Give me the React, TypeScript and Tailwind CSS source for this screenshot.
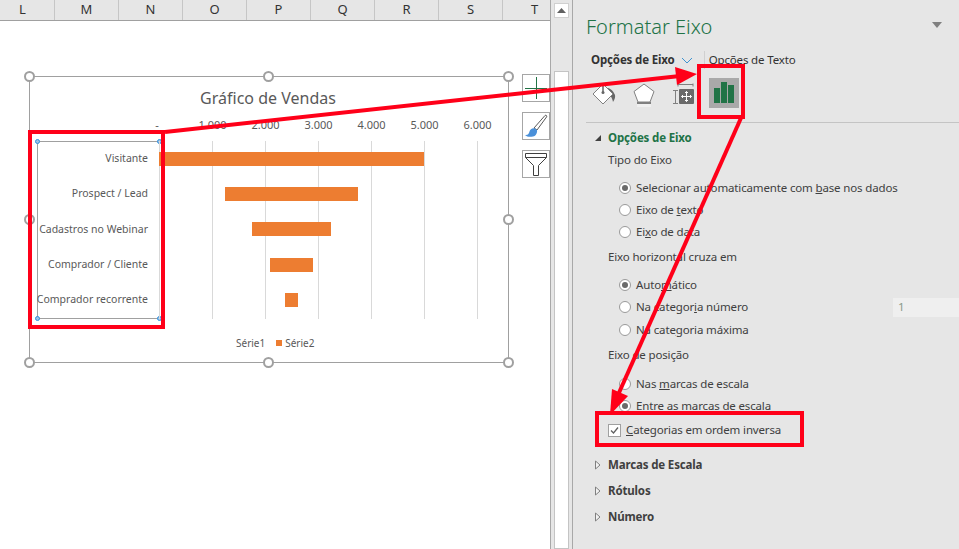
const columns = ['L', 'M', 'N', 'O', 'P', 'Q', 'R', 'S', 'T']
const ticks = ['-', '1.000', '2.000', '3.000', '4.000', '5.000', '6.000']

const funnel = [
  { label: 'Visitante', start: 0, end: 265 },
  { label: 'Prospect / Lead', start: 66, end: 199 },
  { label: 'Cadastros no Webinar', start: 93, end: 172 },
  { label: 'Comprador / Cliente', start: 111, end: 154 },
  { label: 'Comprador recorrente', start: 126, end: 139 },
]

function Handle({ className }: { className: string }) {
  return <span className={`absolute w-[11px] h-[11px] rounded-full bg-white border-2 border-[#a0a0a0] ${className}`} />
}

function AxisHandle({ className }: { className: string }) {
  return <span className={`absolute w-[5px] h-[5px] rounded-full bg-[#9dc3e6] border border-[#2e8fe0] ${className}`} />
}

function Radio({ checked, children }: { checked?: boolean; children: React.ReactNode }) {
  return (
    <div className="flex items-center h-[22px] ml-[46px]">
      <span className="flex items-center justify-center w-3 h-3 rounded-full bg-white border border-[#9a9a9a] shrink-0">
        {checked && <span className="w-[6px] h-[6px] rounded-full bg-[#6a6a6a]" />}
      </span>
      <span className="ml-[5px]">{children}</span>
    </div>
  )
}

function Collapsed({ label, className }: { label: string; className: string }) {
  return (
    <div className={`flex items-center h-[20px] ml-[21px] ${className}`}>
      <svg width="8" height="10" viewBox="0 0 8 10" className="shrink-0">
        <path d="M1.500 1v8L6 5z" fill="#f2f2f2" stroke="#808080" />
      </svg>
      <span className="ml-[6px] font-bold text-[#404040]">{label}</span>
    </div>
  )
}

function App() {
  return (
    <div className="relative flex h-screen w-[959px] overflow-hidden bg-white text-[#404040] font-['Noto_Sans',sans-serif] text-[11.5px] tracking-[-0.15px]">
      {/* Sheet */}
      <div className="flex flex-col w-[550px] shrink-0 overflow-hidden">
        <div className="flex h-[21px] shrink-0 -ml-[9px] bg-[#e6e6e6] border-b border-[#a0a0a0]">
          {columns.map((c) => (
            <div key={c} className="flex items-center justify-center w-16 shrink-0 border-r border-[#c6c6c6] text-[13px] tracking-normal text-[#333333]">
              {c}
            </div>
          ))}
        </div>

        <div className="flex items-start pt-[55px] pl-[29px] text-[#595959] text-[10.5px] tracking-normal">
          {/* Chart */}
          <div className="relative flex flex-col w-[480px] h-[287px] shrink-0 border border-[#a0a0a0]">
            <Handle className="-left-[6px] -top-[6px]" />
            <Handle className="left-[233px] -top-[6px]" />
            <Handle className="-right-[6px] -top-[6px]" />
            <Handle className="-left-[6px] top-[137px]" />
            <Handle className="-right-[6px] top-[137px]" />
            <Handle className="-left-[6px] -bottom-[6px]" />
            <Handle className="left-[233px] -bottom-[6px]" />
            <Handle className="-right-[6px] -bottom-[6px]" />

            <div className="flex justify-center h-[24px] mt-[9px] text-[16px] leading-[24px] -ml-[2px]">Gráfico de Vendas</div>

            <div className="flex h-[16px] mt-[7px] ml-[103px] leading-[16px] text-[11px]">
              {ticks.map((t) => (
                <div key={t} className={`w-[53px] shrink-0 text-center ${t === '-' ? 'pr-[5px]' : ''}`}>{t}</div>
              ))}
            </div>

            <div className="flex ml-[7px] mt-[8px]">
              {/* Category axis, selected */}
              <div className="relative flex flex-col w-[123px] h-[178px] shrink-0 border border-[#a0a0a0]">
                <AxisHandle className="-left-[3px] -top-[3px]" />
                <AxisHandle className="-right-[3px] -top-[3px]" />
                <AxisHandle className="-left-[3px] -bottom-[3px]" />
                <AxisHandle className="-right-[3px] -bottom-[3px]" />
                {funnel.map((row) => (
                  <div key={row.label} className="flex items-center justify-end h-[35.4px] pr-[11px] pb-px whitespace-nowrap">
                    {row.label}
                  </div>
                ))}
              </div>
              {/* Plot */}
              <div className="relative flex flex-col w-[320px] h-[178px] -ml-px">
                <div className="absolute inset-0 flex">
                  {ticks.map((t) => (
                    <div key={t} className="w-[53px] h-full shrink-0 border-l border-[#d9d9d9]" />
                  ))}
                </div>
                {funnel.map((row) => (
                  <div key={row.label} className="relative flex items-center h-[35.4px]">
                    <div
                      className="h-[14px] bg-[#ed7d31]"
                      style={{ marginLeft: row.start, width: row.end - row.start }}
                    />
                  </div>
                ))}
              </div>
            </div>

            <div className="flex items-center h-[16px] mt-[16px] ml-[206px] text-[10px] leading-[16px]">
              <span>Série1</span>
              <span className="w-[6px] h-[6px] ml-[11px] mr-[3px] bg-[#ed7d31]" />
              <span>Série2</span>
            </div>
          </div>

          {/* Chart buttons */}
          <div className="flex flex-col gap-[10px] ml-[13px] -mt-[2px]">
            <div className="flex items-center justify-center w-[28px] h-[28px] bg-white border border-[#a6a6a6]">
              <svg width="24" height="24" viewBox="0 0 24 24">
                <path d="M12.500 1v22M1 12.500h22" stroke="#217346" strokeWidth="1" />
              </svg>
            </div>
            <div className="flex items-center justify-center w-[28px] h-[28px] bg-white border border-[#a6a6a6]">
              <svg width="26" height="26" viewBox="0 0 26 26">
                <path d="M11 15 22 2.500c1-.8 2.200.3 1.600 1.400L14 17z" fill="#fff" stroke="#595959" />
                <path d="M2 22c3 .5 4-1.500 4.500-3.500.5-2 3-4 5.500-3l2 1.500c.5 2.500-1 6-4 6.500-3 .5-6 .5-8-1.500z" fill="#4a90d9" />
              </svg>
            </div>
            <div className="flex items-center justify-center w-[28px] h-[28px] bg-white border border-[#a6a6a6]">
              <svg width="24" height="26" viewBox="0 0 24 26">
                <path d="M1.500 2.500h21v4l-8 8v10h-5v-10l-8-8zM1.500 6.500h21" fill="#fff" stroke="#404040" />
              </svg>
            </div>
          </div>
        </div>
      </div>

      {/* Sheet scrollbar */}
      <div className="flex flex-col w-[23px] shrink-0 px-[3px] pt-[3px] bg-[#e6e6e6] border-l border-r border-[#a8a8a8] border-t-0">
        <div className="flex items-center justify-center h-[15px] bg-white border border-[#d0d0d0]">
          <svg width="9" height="5" viewBox="0 0 9 5"><path d="M4.500 0 9 5H0z" fill="#606060" /></svg>
        </div>
        <div className="flex-1 mt-[53px] bg-white border border-[#c4c4c4]" />
      </div>

      {/* Format pane */}
      <div className="flex flex-col flex-1 min-w-0 bg-[#e6e6e6]">
        <div className="flex items-center justify-between h-[30px] mt-[12px] pl-[13px] pr-[17px]">
          <span className="font-light text-[20px] tracking-normal text-[#217346]">Formatar Eixo</span>
          <svg width="10" height="6" viewBox="0 0 10 6" className="-mt-[5px]"><path d="M0 0h10L5 6z" fill="#808080" /></svg>
        </div>

        <div className="flex items-center h-[20px] mt-[8px] pl-[18px]">
          <span className="font-bold text-[#333333]">Opções de Eixo</span>
          <svg width="12" height="7" viewBox="0 0 12 7" className="ml-[6px]"><path d="M1 1l5 5 5-5" fill="none" stroke="#3f94d1" /></svg>
          <span className="w-px h-[18px] ml-[11px] mr-[4px] bg-[#d0d0d0]" />
          <span className="text-[#333333]">Opções de Texto</span>
        </div>

        <div className="flex items-center h-[30px] mt-[8px] pl-[19px]">
          <svg width="24" height="24" viewBox="0 0 24 24" className="mt-[2px]">
            <path d="M12 6c5-1 9 2 11 7 .5 2-.5 5-2 7-.5-2-1-5-3-6z" fill="#666666" />
            <path d="M11 2 1 12l10 10 10-10z" fill="#fff" stroke="#808080" />
            <path d="M11 2v8" stroke="#666666" strokeWidth="1.500" />
            <circle cx="11" cy="10.500" r="1.500" fill="#666666" />
          </svg>
          <svg width="22" height="26" viewBox="0 0 22 26" className="ml-[17px] mt-[5px]">
            <path d="M11 1 21 8.500 17 19H5L1 8.500z" fill="#fff" stroke="#808080" />
            <rect x="4" y="19" width="14" height="2" fill="#808080" />
            <rect x="4" y="21" width="14" height="3" fill="#f0f0f0" />
          </svg>
          <svg width="22" height="22" viewBox="0 0 22 22" className="ml-[17px] mt-[2px]">
            <path d="M6 1.500h15M6 .5v3M21 .5v3M1 7.500h5M1 20.500h5M3.500 7.500v13" fill="none" stroke="#808080" />
            <rect x="7" y="6" width="15" height="15" rx="1" fill="#6a6a6a" />
            <path d="M14.500 8.500v10M9.500 13.500h10M13 10l1.500-1.500L16 10M13 17l1.500 1.500L16 17M11 12l-1.500 1.500L11 15M18 12l1.500 1.500L18 15" fill="none" stroke="#fff" />
          </svg>
          <span className="flex items-end justify-center gap-px w-[30px] h-[30px] ml-[15px] pb-[5px] bg-[#a9a9a9]">
            <span className="w-[6px] h-[15px] bg-[#217346]" />
            <span className="w-[6px] h-[21px] bg-[#217346]" />
            <span className="w-[6px] h-[18px] bg-[#217346]" />
          </span>
        </div>

        <div className="h-px mt-[14px] ml-[13px] bg-[#c4c4c4]" />

        <div className="flex items-center h-[20px] mt-[5px] ml-[21px]">
          <svg width="8" height="8" viewBox="0 0 8 8" className="shrink-0"><path d="M7 1v6H1z" fill="#404040" /></svg>
          <span className="ml-[6px] font-bold text-[#217346]">Opções de Eixo</span>
        </div>
        <div className="flex items-center h-[20px] mt-[2px] ml-[35px]">Tipo do Eixo</div>

        <div className="mt-[7px]">
          <Radio checked>Selecionar automaticamente com <u>b</u>ase nos dados</Radio>
          <Radio>Eixo de <u>t</u>exto</Radio>
          <Radio>Ei<u>x</u>o de data</Radio>
        </div>
        <div className="flex items-center h-[20px] mt-[4px] ml-[35px]">Eixo horizontal cruza em</div>

        <div className="mt-[7px]">
          <Radio checked>Auto<u>m</u>ático</Radio>
          <div className="flex items-center">
            <Radio>Na categor<u>i</u>a número</Radio>
            <div className="flex items-center w-[66px] h-[19px] ml-auto pl-[5px] bg-[#efefef] text-[#8a9a8a]">1</div>
          </div>
          <div className="mt-px">
            <Radio>Na cate<u>g</u>oria máxima</Radio>
          </div>
        </div>
        <div className="flex items-center h-[20px] mt-[4px] ml-[35px]">Eixo de posição</div>

        <div className="mt-[8px]">
          <Radio>Nas <u>m</u>arcas de escala</Radio>
          <Radio checked>Entre as marcas de escala</Radio>
        </div>
        <div className="flex items-center h-[20px] mt-[3px] ml-[35px]">
          <span className="flex items-center justify-center w-[13px] h-[13px] bg-white border border-[#a0a0a0] shrink-0">
            <svg width="11" height="11" viewBox="0 0 11 11"><path d="M2 5.500 4.500 8 9 2.500" fill="none" stroke="#606060" strokeWidth="1.300" /></svg>
          </span>
          <span className="ml-[5px]"><u>C</u>ategorias em ordem inversa</span>
        </div>

        <Collapsed label="Marcas de Escala" className="mt-[15px]" />
        <Collapsed label="Rótulos" className="mt-[6px]" />
        <Collapsed label="Número" className="mt-[6px]" />
      </div>

      {/* Red annotations */}
      <svg className="absolute inset-0 pointer-events-none" width="959" height="549" viewBox="0 0 959 549">
        <g fill="none" stroke="#ff0019" strokeWidth="4">
          <rect x="30" y="132" width="133" height="195" />
          <rect x="699" y="66" width="44" height="51" />
          <rect x="597" y="413" width="205" height="32" />
          <path d="M165 132 680 76" />
          <path d="M741 118 618 395" />
        </g>
        <path d="M697 74 675 67 677 85z" fill="#ff0019" />
        <path d="M610 415 612 389 628 396z" fill="#ff0019" />
      </svg>
    </div>
  )
}

export default App
